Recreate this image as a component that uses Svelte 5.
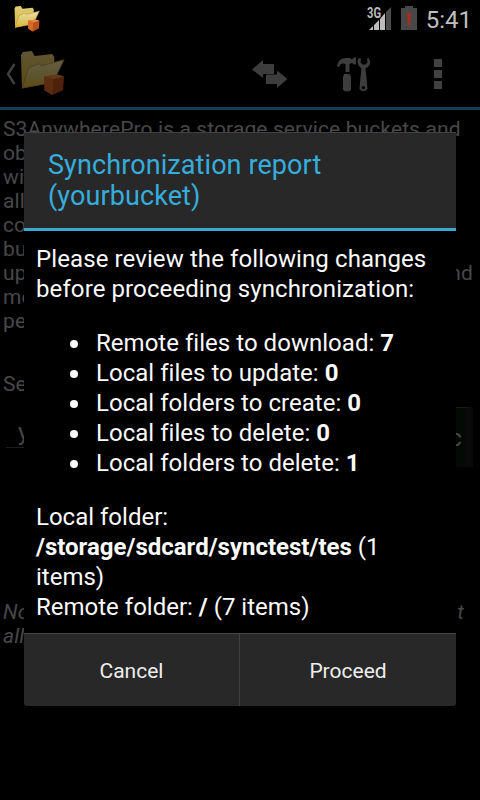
<script>
	let { time = '5:41', bucket = 'yourbucket' } = $props();

	const intro = [
		['S3AnywherePro is a storage service buckets and'],
		['ob'],
		['wi'],
		['all'],
		['co'],
		['bu'],
		['up', 'nd'],
		['mo'],
		['pe']
	];

	const changes = [
		{ label: 'Remote files to download', count: 7 },
		{ label: 'Local files to update', count: 0 },
		{ label: 'Local folders to create', count: 0 },
		{ label: 'Local files to delete', count: 0 },
		{ label: 'Local folders to delete', count: 1 }
	];
</script>

{#snippet folder()}
	<svg class="folder" viewBox="0 0 46 46">
		<defs>
			<linearGradient id="back" x1="0" y1="0" x2="0" y2="1">
				<stop offset="0" stop-color="#e0cd79" />
				<stop offset="1" stop-color="#d9b02e" />
			</linearGradient>
			<linearGradient id="front" x1="0" y1="0" x2="0" y2="1">
				<stop offset="0" stop-color="#f0e0a0" />
				<stop offset="0.55" stop-color="#dec96f" />
				<stop offset="1" stop-color="#dfb52a" />
			</linearGradient>
		</defs>
		<path d="M1 4 L3 1 L12 0 L15 5 L33 3 L35 6 L35 32 L2 38 Z" fill="url(#back)" />
		<path d="M2 38 L9 17 L19 13 L22 15 L45 9 L34 32 Z" fill="url(#front)" stroke="#a88d42" stroke-width="0.8" />
		<path d="M25 26 L38 24 L45 26 L44 40 L33 45 L25 40 Z" fill="#b9521a" />
		<path d="M25 26 L38 24 L45 26 L34 29 Z" fill="#e28a45" />
		<path d="M25 26 L34 29 L33 45 L25 40 Z" fill="#d86a28" />
	</svg>
{/snippet}

<div class="screen">
	<header class="status">
		<div class="notification">{@render folder()}</div>
		<div class="status-right">
			<svg class="signal" width="26" height="26" viewBox="0 0 26 26">
				<text x="0" y="11.500" textLength="14" lengthAdjust="spacingAndGlyphs">3G</text>
				<path d="M2 24 L6 20 V24 Z M7 19 L12 14 V24 H7 Z M13 13 L18 7 V24 H13 Z" fill="#bdbdbd" />
				<path d="M19 6 L24 1 V24 H19 Z" fill="#4b4b4b" />
			</svg>
			<svg class="battery" width="16" height="24" viewBox="0 0 16 24">
				<path d="M4 0 H12 V2 H16 V24 H0 V2 H4 Z" fill="#484848" />
				<path d="M6 7 H10 L9.5 15 H6.5 Z M6.5 16 H9.5 V19 H6.5 Z" fill="#a82b1c" />
			</svg>
			<span class="clock">{time}</span>
		</div>
	</header>

	<nav class="actions">
		<svg class="back" width="10" height="22" viewBox="0 0 10 22">
			<path d="M8.5 1 L2 11 L8.5 21" fill="none" stroke="#404040" stroke-width="2.4" />
		</svg>
		<div class="app-icon">{@render folder()}</div>
		<svg class="swap" width="36" height="28" viewBox="0 0 36 28">
			<path d="M0 9.5 L11 0 V4 H22 V14 H11 V18 Z M14 14.5 H25 V10.5 L35.5 19 L25 28 V24 H14 Z" fill="#3d3d3d" />
		</svg>
		<svg class="tools" width="34" height="35" viewBox="0 0 34 35">
			<path d="M0 9 C1 4 4 1 9 1 H13 L15 2.5 L17 0.5 H19 V7.5 H17 L15 6 L12.5 7 V15 H8.5 V7 C5 5.5 3 7 2 10 Z M7 17 H12.5 L14 20 V33 Q10 36 6 33 V20 Z" fill="#3d3d3d" />
			<path d="M22 1 C19 5 21 9 24.5 11.5 L23.5 20 L22.5 32 Q26.5 36.5 30.5 32 L29.5 20 L28.5 11.5 C33 9 34.5 5 31.5 1 L30 1.5 L30.5 5.5 L28.5 7.5 H25.5 L23.5 5.5 L24 1.5 Z M26.5 29 A1.7 1.7 0 1 1 26.4 29 Z" fill="#3d3d3d" fill-rule="evenodd" />
		</svg>
		<svg class="overflow" width="8" height="30" viewBox="0 0 8 30">
			<path d="M0 0 H8 V8 H0 Z M0 11 H8 V19 H0 Z M0 22 H8 V30 H0 Z" fill="#414141" />
		</svg>
	</nav>

	<main class="page">
		<div class="intro">
			{#each intro as row}
				<div class="row">
					{#each row as part}
						<span>{part}</span>
					{/each}
				</div>
			{/each}
		</div>
		<div class="select-label">Se</div>
		<div class="form">
			<div class="field">y</div>
			<div class="sync">c</div>
		</div>
		<div class="note">
			<div class="row"><span>No</span><span>t</span></div>
			<div class="row"><span>all</span></div>
		</div>
	</main>

	<section class="dialog">
		<h1>Synchronization report<br />({bucket})</h1>
		<div class="report">
			<p class="lead">Please review the following changes<br />before proceeding synchronization:</p>
			<ul>
				{#each changes as change}
					<li>{change.label}: <b>{change.count}</b></li>
				{/each}
			</ul>
			<p>
				Local folder:<br />
				<b>/storage/sdcard/synctest/tes</b> (1<br />
				items)<br />
				Remote folder: <b>/</b> (7 items)
			</p>
		</div>
		<div class="buttons">
			<button>Cancel</button>
			<button>Proceed</button>
		</div>
	</section>
</div>

<style>
	:global(body) {
		background: #000;
	}

	.screen {
		position: relative;
		width: 480px;
		height: 800px;
		overflow: hidden;
		background: #000;
		font-family: Roboto, 'Liberation Sans', sans-serif;
	}

	svg {
		display: block;
		flex-shrink: 0;
	}

	.folder {
		width: 100%;
		height: 100%;
	}

	.status {
		display: flex;
		justify-content: space-between;
		height: 38px;
		padding: 0 8px 0 14px;
		box-sizing: border-box;
	}

	.notification {
		width: 26px;
		height: 26px;
		margin-top: 6px;
	}

	.status-right {
		display: flex;
		align-items: flex-start;
	}

	.signal {
		margin: 6px 8px 0 0;
	}

	.signal text {
		font-size: 14.5px;
		font-weight: 700;
		fill: #bdbdbd;
	}

	.battery {
		margin: 6px 9px 0 0;
	}

	.clock {
		font-size: 24px;
		line-height: 40px;
		color: #bebebe;
	}

	.actions {
		display: flex;
		align-items: flex-start;
		height: 72px;
		box-sizing: border-box;
		padding: 0 0 0 6px;
		border-bottom: 3px solid #144158;
	}

	.back {
		margin-top: 25px;
	}

	.app-icon {
		width: 45px;
		height: 45px;
		margin: 13px 187px 0 4px;
		opacity: 0.42;
	}

	.swap {
		margin-top: 22px;
	}

	.tools {
		margin: 19px 0 0 49px;
	}

	.overflow {
		margin: 21px 0 0 63px;
	}

	.page {
		padding: 7px 7px 0 3px;
		color: #484848;
		font-size: 21px;
		line-height: 24px;
		letter-spacing: 0.11px;
	}

	.row {
		display: flex;
		justify-content: space-between;
		white-space: nowrap;
	}

	.select-label {
		margin-top: 39px;
	}

	.form {
		display: flex;
		justify-content: space-between;
		margin: 11px 0 0 3px;
	}

	.field {
		width: 300px;
		height: 41px;
		padding-left: 12px;
		box-sizing: border-box;
		border-bottom: 1px solid #1c1c1c;
		font-size: 24px;
		line-height: 50px;
	}

	.sync {
		width: 70px;
		height: 60px;
		padding-right: 3px;
		box-sizing: border-box;
		border-top: 1px solid #1a1a1a;
		border-right: 8px solid #090909;
		background: #030a03;
		font-size: 24px;
		line-height: 60px;
		text-align: right;
	}

	.note {
		margin-top: 133px;
		padding-right: 9px;
		font-style: italic;
	}

	.dialog {
		position: absolute;
		top: 132px;
		left: 24px;
		width: 432px;
		height: 574px;
		display: flex;
		flex-direction: column;
		background: #000;
	}

	h1 {
		height: 99px;
		margin: 0;
		padding: 17px 24px 0;
		box-sizing: border-box;
		border-top: 1px solid #414141;
		border-bottom: 3px solid #3ba9d2;
		background: #282828;
		color: #36addc;
		font-size: 27px;
		font-weight: 400;
		line-height: 31px;
		letter-spacing: 0.09px;
	}

	.report {
		height: 402px;
		padding: 13px 12px 0;
		box-sizing: border-box;
		color: #fafafa;
		font-size: 24px;
		line-height: 30px;
		white-space: nowrap;
	}

	.report p {
		margin: 0;
	}

	.report .lead {
		letter-spacing: 0.1px;
	}

	.report ul {
		margin: 24px 0;
		padding: 0;
		list-style: none;
		letter-spacing: 0.03px;
	}

	.report li {
		display: flex;
		align-items: center;
		padding-left: 34px;
		white-space: pre;
	}

	.report li::before {
		content: '';
		width: 8px;
		height: 8px;
		margin: 2px 18px 0 0;
		border-radius: 50%;
		background: #fafafa;
	}

	.buttons {
		display: flex;
		height: 73px;
		border-top: 1px solid #454545;
		box-sizing: border-box;
		background: #282828;
		border-radius: 0 0 3px 3px;
	}

	button {
		width: 215px;
		padding: 1px 0 0;
		border: 0;
		background: none;
		color: #eee;
		font: 21px Roboto, 'Liberation Sans', sans-serif;
	}

	button + button {
		width: 217px;
		border-left: 1px solid #404040;
	}
</style>
